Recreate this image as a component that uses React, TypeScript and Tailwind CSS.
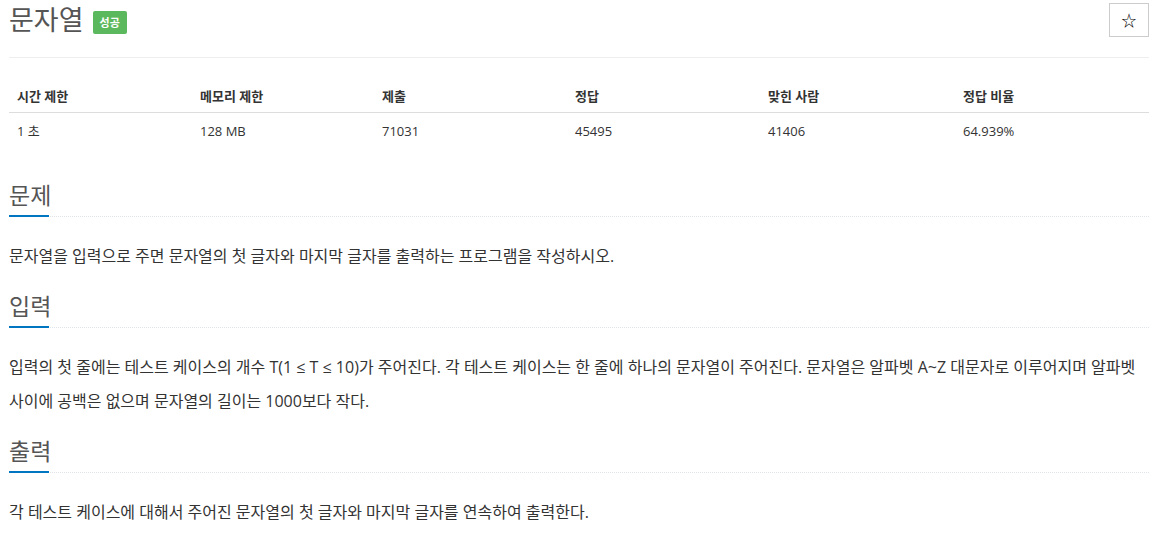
import React from "react";

const FONT = { fontFamily: '"Open Sans", "Noto Sans CJK KR", sans-serif' };

const COLS = [
  { head: "시간 제한", value: "1 초", w: "w-[183px]" },
  { head: "메모리 제한", value: "128 MB", w: "w-[182px]" },
  { head: "제출", value: "71031", w: "w-[193px]" },
  { head: "정답", value: "45495", w: "w-[193px]" },
  { head: "맞힌 사람", value: "41406", w: "w-[195px]" },
  { head: "정답 비율", value: "64.939%", w: "flex-1" },
];

function Section({ title, children }: { title: string; children: React.ReactNode }) {
  return (
    <section>
      <div className="relative border-b border-dotted border-[#dfe4ea] pt-[3px] pb-[5px]">
        <h2 className="text-[23px] leading-[32px] text-[#555]">{title}</h2>
        <div className="absolute left-0 bottom-[-1px] h-[2px] w-[40px] bg-[#0076c0]" />
      </div>
      <div className="pt-[22px] pb-[14px] text-[16px] leading-[34px] text-[#333]">{children}</div>
    </section>
  );
}

export default function App() {
  return (
    <div className="min-h-screen bg-white pl-[9px] pr-[3px]" style={FONT}>
      {/* page header */}
      <div className="flex h-[58px] items-start justify-between border-b border-[#eee]">
        <div className="flex items-center gap-[9px]">
          <h1 className="text-[27px] leading-[40px] text-[#555]">문자열</h1>
          <span className="mt-[5px] rounded-[2px] bg-[#5cb85c] px-[7px] py-[3px] text-[11px] font-bold leading-[17px] text-white">
            성공
          </span>
        </div>
        <button className="mt-[3px] flex h-[34px] w-[40px] items-center justify-center border border-[#ccc] bg-white text-[15px] text-black">
          ☆
        </button>
      </div>

      {/* limits table */}
      <div className="mt-[21px] pb-[27px]">
        <div className="flex border-b border-[#ddd]">
          {COLS.map((c) => (
            <div key={c.head} className={`${c.w} px-[8px] pt-[7px] pb-[6px] text-[13px] font-bold leading-[20px] text-[#333]`}>
              {c.head}
            </div>
          ))}
        </div>
        <div className="flex">
          {COLS.map((c) => (
            <div key={c.head} className={`${c.w} px-[8px] pt-[8px] pb-[8px] text-[13px] leading-[20px] text-[#333]`}>
              {c.value}
            </div>
          ))}
        </div>
      </div>

      <Section title="문제">
        <p>문자열을 입력으로 주면 문자열의 첫 글자와 마지막 글자를 출력하는 프로그램을 작성하시오.</p>
      </Section>
      <Section title="입력">
        <p>
          입력의 첫 줄에는 테스트 케이스의 개수 T(1 ≤ T ≤ 10)가 주어진다. 각 테스트 케이스는 한 줄에 하나의 문자열이 주어진다. 문자열은 알파벳 A~Z 대문자로 이루어지며 알파벳 사이에 공백은 없으며 문자열의 길이는 1000보다 작다.
        </p>
      </Section>
      <Section title="출력">
        <p>각 테스트 케이스에 대해서 주어진 문자열의 첫 글자와 마지막 글자를 연속하여 출력한다.</p>
      </Section>
    </div>
  );
}
